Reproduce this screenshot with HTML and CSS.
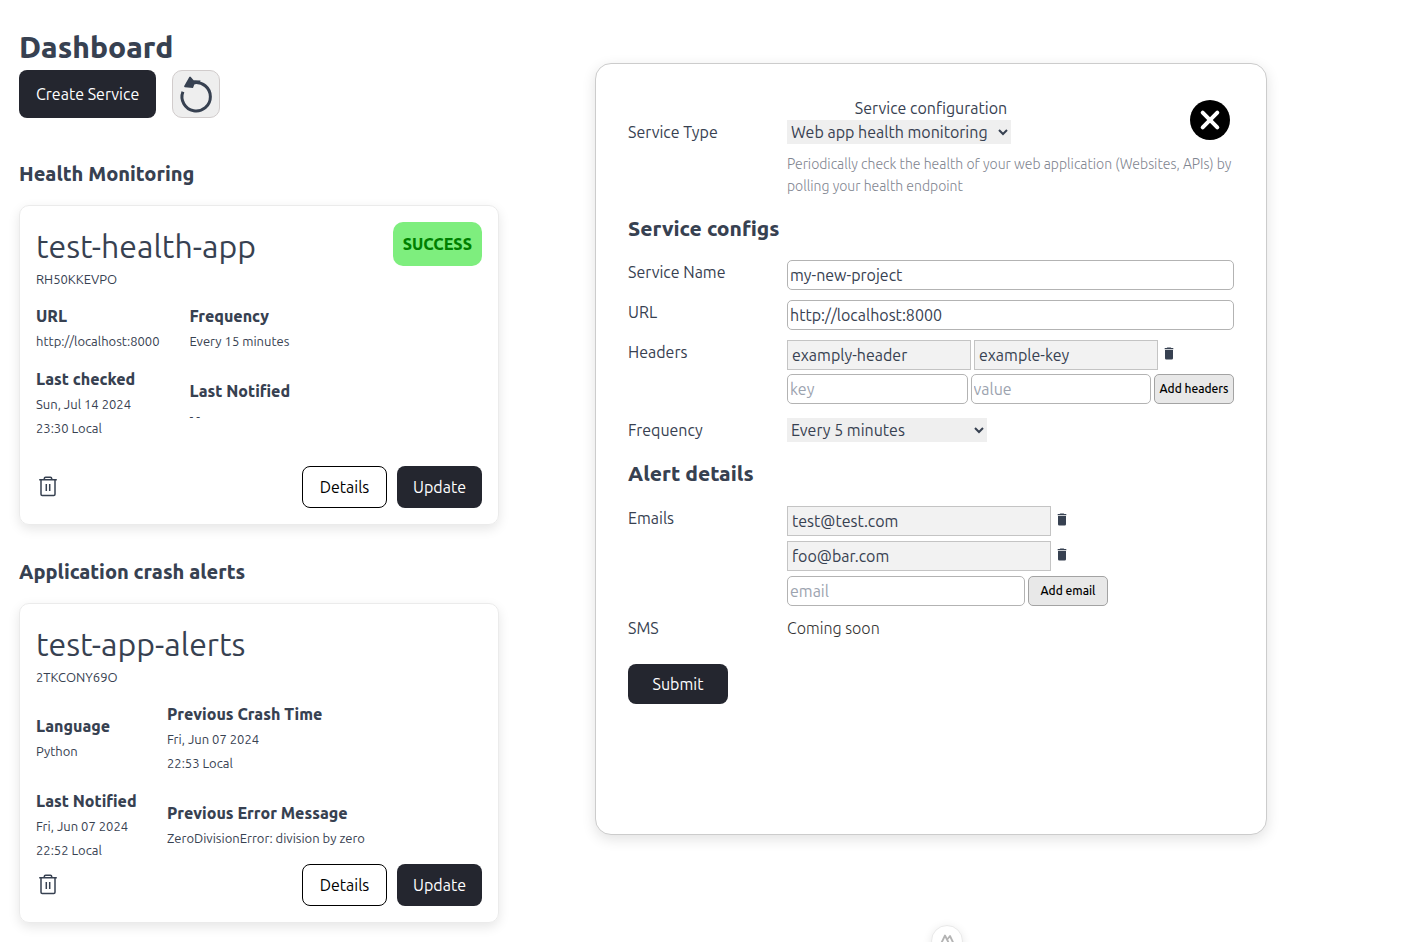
FILE: index.html
```html
<!DOCTYPE html>
<html lang="en">
<head>
<meta charset="utf-8">
<meta name="viewport" content="width=device-width, initial-scale=1">
<title>Dashboard</title>
<link rel="stylesheet" href="styles.css">
</head>
<body>
<svg class="sprite" aria-hidden="true">
  <symbol id="trash-outline" viewBox="0 0 24 24">
    <path d="M3.200 4.700h17.600M5 4.700v14.500q0 1.200 1.200 1.200h11.600q1.200 0 1.200-1.200V4.700M8.300 4.700V3.400q0-1.200 1.300-1.200h4.800q1.300 0 1.300 1.200v1.300M10.300 9v7M13.700 9v7" fill="none" stroke="currentColor" stroke-width="1.500"/>
  </symbol>
  <symbol id="trash-solid" viewBox="0 0 10 13">
    <path d="M3.300 0.400h3.400l.6.600H9.300v1.200H.7V1h2zM1 3h8v8.200q0 1.300-1.300 1.300H2.300Q1 12.500 1 11.200z" fill="currentColor"/>
  </symbol>
</svg>
<div class="page">
  <main class="dashboard">
    <h1 class="page-title">Dashboard</h1>
    <div class="toolbar">
      <button class="btn btn-dark btn-create" type="button">Create Service</button>
      <button class="btn-refresh" type="button" aria-label="Refresh">
        <svg width="36" height="40" viewBox="0 0 36 40" aria-hidden="true">
          <path d="M4.400 17.200A14.200 14.200 0 1 0 15 8.300L18 7.800" transform="translate(.5 .5)" fill="none" stroke="currentColor" stroke-width="3"/>
          <path d="M11.300 3q.7-.8 1.500 0l2.800 3.300 7 .2-1.200 3-5 .7-1.400 3.900-8.200-.8q-1-.4-.6-1.400z" fill="currentColor"/>
        </svg>
      </button>
    </div>

    <section class="group">
      <h2 class="heading">Health Monitoring</h2>
      <article class="card">
        <header class="card-head">
          <div>
            <h3 class="card-title">test-health-app</h3>
            <p class="card-id">RH50KKEVPO</p>
          </div>
          <span class="badge">SUCCESS</span>
        </header>
        <dl class="facts">
          <div><dt>URL</dt><dd>http://localhost:8000</dd></div>
          <div><dt>Frequency</dt><dd>Every 15 minutes</dd></div>
          <div><dt>Last checked</dt><dd>Sun, Jul 14 2024</dd><dd>23:30 Local</dd></div>
          <div><dt>Last Notified</dt><dd>- -</dd></div>
        </dl>
        <footer class="card-foot">
          <button class="btn-icon" type="button" aria-label="Delete test-health-app"><svg width="24" height="24" aria-hidden="true"><use href="#trash-outline"/></svg></button>
          <button class="btn btn-light" type="button">Details</button>
          <button class="btn btn-dark" type="button">Update</button>
        </footer>
      </article>
    </section>

    <section class="group">
      <h2 class="heading">Application crash alerts</h2>
      <article class="card">
        <header class="card-head">
          <div>
            <h3 class="card-title">test-app-alerts</h3>
            <p class="card-id">2TKCONY69O</p>
          </div>
        </header>
        <dl class="facts">
          <div><dt>Language</dt><dd>Python</dd></div>
          <div><dt>Previous Crash Time</dt><dd>Fri, Jun 07 2024</dd><dd>22:53 Local</dd></div>
          <div><dt>Last Notified</dt><dd>Fri, Jun 07 2024</dd><dd>22:52 Local</dd></div>
          <div><dt>Previous Error Message</dt><dd>ZeroDivisionError: division by zero</dd></div>
        </dl>
        <footer class="card-foot">
          <button class="btn-icon" type="button" aria-label="Delete test-app-alerts"><svg width="24" height="24" aria-hidden="true"><use href="#trash-outline"/></svg></button>
          <button class="btn btn-light" type="button">Details</button>
          <button class="btn btn-dark" type="button">Update</button>
        </footer>
      </article>
    </section>
  </main>

  <form class="panel" aria-labelledby="panel-title">
    <button class="btn-close" type="button" aria-label="Close">
      <svg width="40" height="40" viewBox="0 0 40 40" aria-hidden="true"><circle cx="20" cy="20" r="20"/><path d="M12.700 12.700l14.600 14.600M27.300 12.700l-14.600 14.600" stroke="#fff" stroke-width="4" stroke-linecap="round"/></svg>
    </button>
    <p class="panel-title" id="panel-title">Service configuration</p>
    <div class="row">
      <label for="type">Service Type</label>
      <div>
        <select class="select select-type" id="type"><option>Web app health monitoring</option></select>
        <p class="hint">Periodically check the health of your web application (Websites, APIs) by polling your health endpoint</p>
      </div>
    </div>

    <h2 class="heading heading-form">Service configs</h2>
    <div class="rows">
      <div class="row">
        <label for="name">Service Name</label>
        <input class="field" id="name" type="text" value="my-new-project">
      </div>
      <div class="row">
        <label for="url">URL</label>
        <input class="field" id="url" type="text" value="http://localhost:8000">
      </div>
      <div class="row">
        <span>Headers</span>
        <div class="stack stack-headers">
          <div class="line">
            <input class="field field-set" type="text" aria-label="Header key" value="examply-header" readonly>
            <input class="field field-set" type="text" aria-label="Header value" value="example-key" readonly>
            <button class="btn-remove" type="button" aria-label="Remove header"><svg width="10" height="13" aria-hidden="true"><use href="#trash-solid"/></svg></button>
          </div>
          <div class="line">
            <input class="field" type="text" aria-label="New header key" placeholder="key">
            <input class="field" type="text" aria-label="New header value" placeholder="value">
            <button class="btn-add" type="button">Add headers</button>
          </div>
        </div>
      </div>
      <div class="row row-frequency">
        <label for="frequency">Frequency</label>
        <select class="select select-frequency" id="frequency"><option>Every 5 minutes</option></select>
      </div>
    </div>

    <h2 class="heading heading-form heading-alerts">Alert details</h2>
    <div class="rows">
      <div class="row">
        <span>Emails</span>
        <div class="stack stack-emails">
          <div class="line">
            <input class="field field-set" type="text" aria-label="Email 1" value="test@test.com" readonly>
            <button class="btn-remove" type="button" aria-label="Remove test@test.com"><svg width="10" height="13" aria-hidden="true"><use href="#trash-solid"/></svg></button>
          </div>
          <div class="line">
            <input class="field field-set" type="text" aria-label="Email 2" value="foo@bar.com" readonly>
            <button class="btn-remove" type="button" aria-label="Remove foo@bar.com"><svg width="10" height="13" aria-hidden="true"><use href="#trash-solid"/></svg></button>
          </div>
          <div class="line">
            <input class="field" type="text" aria-label="New email" placeholder="email">
            <button class="btn-add" type="button">Add email</button>
          </div>
        </div>
      </div>
      <div class="row">
        <span>SMS</span>
        <span class="soon">Coming soon</span>
      </div>
    </div>
    <button class="btn btn-dark btn-submit" type="submit">Submit</button>
  </form>
</div>
<button class="devtools" type="button" aria-label="Developer tools">
  <svg width="18" height="14" viewBox="0 0 18 14" aria-hidden="true"><path d="M10 12.500H2.200L7 2.500l4.500 9M9.600 6L12 3l4.500 9.500H10" fill="none" stroke="#b4b4b4" stroke-width="1.800" stroke-linejoin="round"/></svg>
</button>
</body>
</html>
```
FILE: styles.css
```css
:root {
  --text: #374151;
  --dark: #24262f;
  --line: #b3b3b3;
}
* { box-sizing: border-box; }
body {
  margin: 0;
  height: 100vh;
  overflow: hidden;
  background: #fff;
  color: var(--text);
  font-family: Ubuntu, "Noto Sans", "Open Sans", sans-serif;
  font-size: 16px;
  font-weight: 400;
  line-height: 24px;
}
h1, h2, h3, p, dl, dd { margin: 0; }
button, input, select { font: inherit; color: inherit; }
button { padding: 0; border: 0; background: none; cursor: pointer; }
svg { display: block; }
.sprite { position: absolute; width: 0; height: 0; }

.page {
  display: grid;
  grid-template-columns: minmax(0, 480px) minmax(0, 672px);
  column-gap: 96px;
  align-items: start;
  padding: 29px 19px 0;
}

.page-title { font-size: 30px; line-height: 36px; font-weight: 800; }
.heading { font-size: 20px; line-height: 28px; font-weight: 800; }
.heading-form { margin-bottom: 18px; font-size: 21px; }
.toolbar { display: flex; gap: 16px; margin: 5px 0 42px; }
.btn { border-radius: 8px; }
.btn-dark { background: var(--dark); color: #fff; }
.btn-light { border: 1px solid #000; background: #fff; color: #000; }
.btn-create { height: 48px; padding: 0 17px; }
.btn-refresh {
  display: flex;
  align-items: center;
  justify-content: center;
  width: 48px;
  height: 48px;
  border: 1px solid #d1cccc;
  border-radius: 10px;
  background: #eee;
}

.group + .group { margin-top: 33px; }
.card {
  display: flex;
  flex-direction: column;
  min-height: 320px;
  margin-top: 17px;
  padding: 16px;
  border: 1px solid #ebebeb;
  border-radius: 10px;
  box-shadow: 0 4px 12px rgba(0, 0, 0, 0.1);
}
.card-head { display: flex; justify-content: space-between; align-items: flex-start; margin-bottom: 16px; }
.card-title { font-size: 32px; line-height: 48px; font-weight: 400; }
.card-id { font-size: 13px; line-height: 18px; }
.badge {
  padding: 10px;
  border-radius: 10px;
  background: #7eee7e;
  color: #008000;
  font-weight: 800;
}
.facts { display: grid; grid-template-columns: minmax(101px, auto) 1fr; align-items: center; gap: 14px 30px; }
.facts dt { margin-bottom: 1px; font-weight: 800; }
.facts dd { font-size: 13px; }
.card-foot { display: flex; gap: 10px; margin-top: auto; }
.card-foot .btn { width: 85px; height: 42px; }
.btn-icon { display: flex; align-items: center; margin-right: auto; }

.panel {
  position: relative;
  min-height: 82vh;
  margin-top: 34px;
  padding: 32px;
  border: 1px solid #ccc;
  border-radius: 16px;
  background: #fff;
  box-shadow: 0 4px 14px rgba(0, 0, 0, 0.12);
}
.btn-close { position: absolute; top: 36px; right: 36px; }
.panel-title { text-align: center; }
.row { display: grid; grid-template-columns: 159px minmax(0, 1fr); align-items: start; }
.rows { display: grid; gap: 10px; }
.select { display: block; height: 24px; padding: 0; border: 0; border-radius: 0; background: #efefef; }
.select-type { width: 224px; }
.select-frequency { width: 200px; }
.hint {
  margin: 9px 0 17px;
  color: #7f8590;
  font-size: 14px;
  line-height: 22px;
  font-weight: 300;
}
.field {
  width: 100%;
  min-width: 0;
  height: 30px;
  padding: 0 2px;
  border: 1px solid var(--line);
  border-radius: 5px;
  background: #fff;
}
.field::placeholder { color: #9ca3af; }
.field-set { padding: 0 4px; border-color: #c4c4c4; border-radius: 0; background: #f2f2f2; }
.stack { display: grid; }
.stack-headers { gap: 4px; }
.stack-emails { gap: 5px; }
.line { display: flex; gap: 3px; }
.stack-headers .field { flex: 1; }
.stack-headers .field-set { flex: 0 1 184px; }
.stack-emails .field { flex: 0 1 238px; }
.stack-emails .field-set { flex-basis: 264px; }
.btn-remove { display: flex; align-items: center; padding: 0 3px 3px; }
.btn-add {
  flex: none;
  width: 80px;
  height: 30px;
  border: 1px solid #a3a3a3;
  border-radius: 5px;
  background: #e8e8e8;
  color: #000;
  font-size: 12px;
  font-weight: 500;
}
.row-frequency { margin-top: 4px; }
.heading-alerts { margin-top: 17px; margin-bottom: 19px; }
.soon { color: #333; font-weight: 300; }
.btn-submit { width: 100px; height: 40px; margin-top: 24px; }

.devtools {
  position: fixed;
  bottom: -15px;
  left: calc(50% + 230px);
  display: flex;
  justify-content: center;
  width: 32px;
  height: 32px;
  padding-top: 7px;
  border: 1px solid #e8e8e8;
  border-radius: 50%;
  background: #fff;
  box-shadow: 0 2px 10px rgba(0, 0, 0, 0.1);
}
```
